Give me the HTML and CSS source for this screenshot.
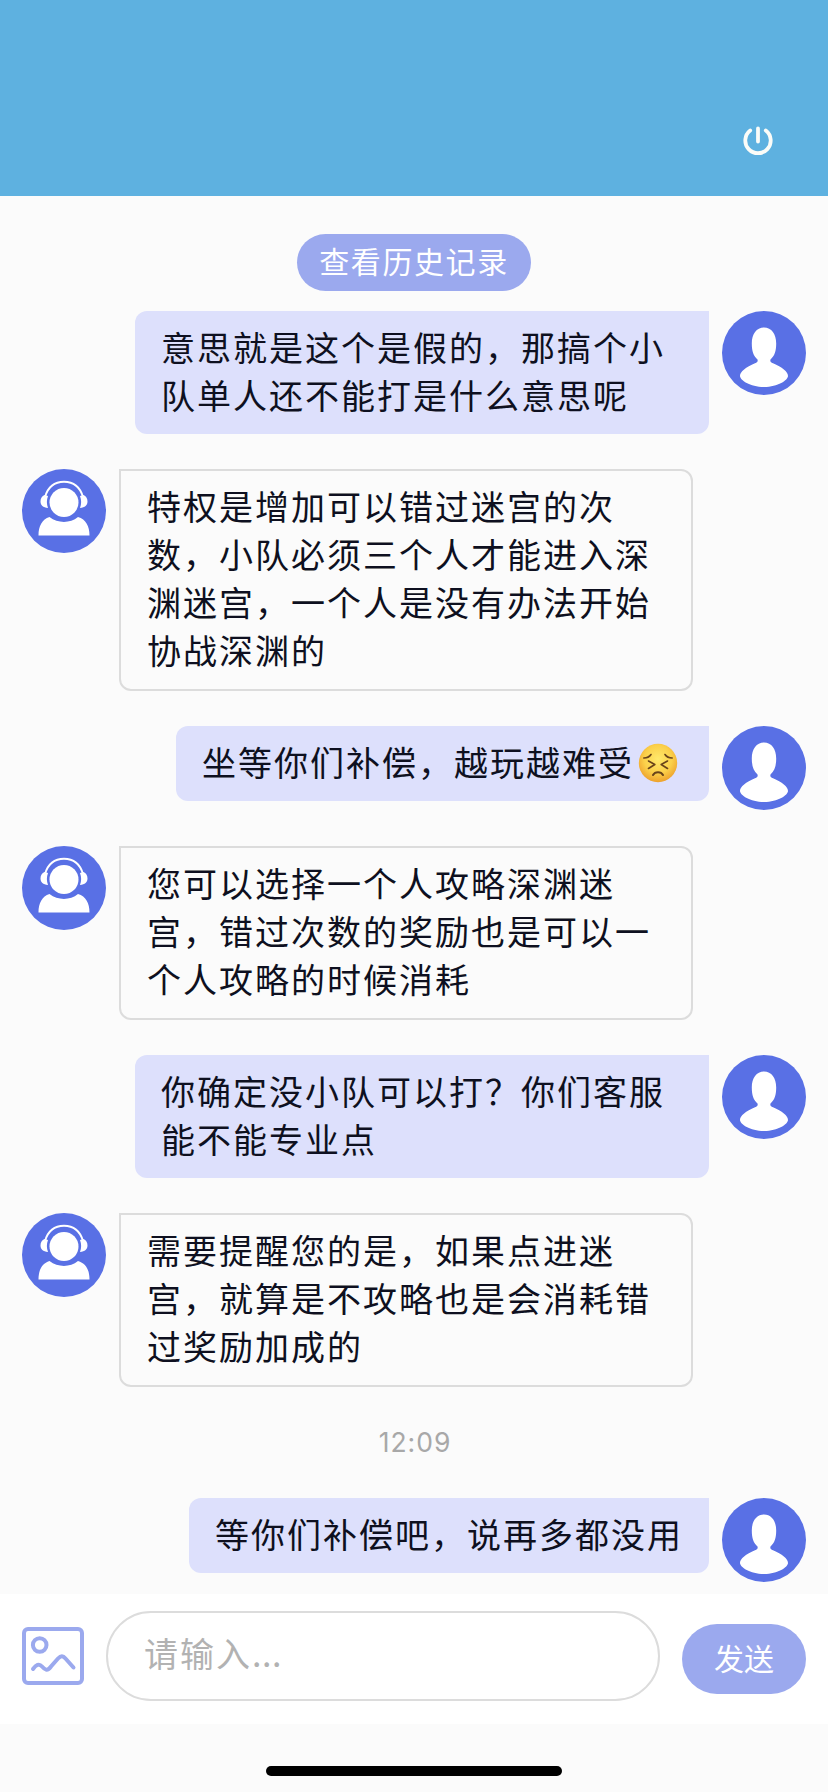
FILE: index.html
```html
<!DOCTYPE html>
<html lang="zh-CN">
<head>
<meta charset="utf-8">
<title>在线客服</title>
<link rel="stylesheet" href="styles.css">
</head>
<body>
<svg class="defs" width="0" height="0" aria-hidden="true">
  <symbol id="user" viewBox="0 0 84 84">
    <circle cx="42" cy="42" r="42" fill="#5970e5"/>
    <path d="M42 16.500C34.500 16.500 29.800 23 29.800 32.500C29.800 40 31.500 45 35.500 48.500C36 50.500 35.500 51 33 52.200C24 56 18 60.500 18 65C18 69 28 76 42 76S66 69 66 65C66 60.500 60 56 51 52.200C48.500 51 48 50.500 48.500 48.500C52.500 45 54.200 40 54.200 32.500C54.200 23 49.500 16.500 42 16.500Z" fill="#fff"/>
  </symbol>
  <symbol id="agent" viewBox="0 0 84 84">
    <circle cx="42" cy="42" r="42" fill="#5970e5"/>
    <path d="M23 28C26 18 33 12.800 42 12.800S58 18 61 28" fill="none" stroke="#fff" stroke-width="1.900"/>
    <path d="M22.500 26L26 27C24.500 31 24.500 35 26 39C21 38.500 18.500 36 18.500 32.500C18.500 29.500 20 27 22.500 26ZM61.500 26L58 27C59.500 31 59.500 35 58 39C63 38.500 65.500 36 65.500 32.500C65.500 29.500 64 27 61.500 26Z" fill="#fff"/>
    <circle cx="42" cy="33.500" r="14.500" fill="#fff"/>
    <path d="M16.500 66.500C16.500 57 20 50.500 27.500 48C36 54.500 48 54.500 56 48C64 50.500 67.500 57 67.500 66.500Z" fill="#fff"/>
  </symbol>
</svg>
<div class="screen">
  <header class="header">
    <svg class="power" viewBox="0 0 30 30"><path d="M7.200 4.500A12.700 12.700 0 1 0 22.800 4.500M15 2.500V15.500" fill="none" stroke="#fbfcf8" stroke-width="3.800" stroke-linecap="round"/></svg>
  </header>
  <main class="chat">
    <button class="history">查看历史记录</button>
    <div class="row mine"><p class="bubble">意思就是这个是假的，那搞个小队单人还不能打是什么意思呢</p><svg class="avatar"><use href="#user"/></svg></div>
    <div class="row"><svg class="avatar"><use href="#agent"/></svg><p class="bubble">特权是增加可以错过迷宫的次数，小队必须三个人才能进入深渊迷宫，一个人是没有办法开始协战深渊的</p></div>
    <div class="row mine"><p class="bubble">坐等你们补偿，越玩越难受<svg class="emoji" viewBox="0 0 40 40">
      <defs><radialGradient id="face" cx=".5" cy=".4" r=".6"><stop offset="0" stop-color="#ffe96c"/><stop offset=".6" stop-color="#fbd04a"/><stop offset="1" stop-color="#eda12c"/></radialGradient></defs>
      <circle cx="20" cy="20" r="19.200" fill="url(#face)"/>
      <g fill="none" stroke="#69431a" stroke-width="1.600" stroke-linecap="round" stroke-linejoin="round"><path d="M5.800 15C8.500 15 11.500 13.800 13 11.500M34.200 15C31.500 15 28.500 13.800 27 11.500M10.500 18L16.800 21.500L10.500 25.500M29.500 18L23.200 21.500L29.500 25.500"/><path d="M15 32C17 28.200 23 28.200 25 32" stroke-width="2"/></g>
    </svg></p><svg class="avatar"><use href="#user"/></svg></div>
    <div class="row"><svg class="avatar"><use href="#agent"/></svg><p class="bubble">您可以选择一个人攻略深渊迷宫，错过次数的奖励也是可以一个人攻略的时候消耗</p></div>
    <div class="row mine"><p class="bubble">你确定没小队可以打？你们客服能不能专业点</p><svg class="avatar"><use href="#user"/></svg></div>
    <div class="row"><svg class="avatar"><use href="#agent"/></svg><p class="bubble">需要提醒您的是，如果点进迷宫，就算是不攻略也是会消耗错过奖励加成的</p></div>
    <time class="time">12:09</time>
    <div class="row mine"><p class="bubble">等你们补偿吧，说再多都没用</p><svg class="avatar"><use href="#user"/></svg></div>
  </main>
  <footer class="composer">
    <svg class="picture" viewBox="0 0 62 58" fill="none" stroke="#9ba9ee" stroke-width="4"><rect x="2" y="2" width="58" height="54" rx="4"/><circle cx="17.700" cy="18" r="6.800"/><path d="M11 42C14 38 17 36 20 39.500S25.500 44.500 29 39.500L36 31.500C39 28.300 41 28.500 43.500 31.500L51.500 40.500" stroke-linecap="round"/></svg>
    <div class="input">请输入<span class="dots">...</span></div>
    <button class="send">发送</button>
  </footer>
  <div class="bottom"><div class="home"></div></div>
</div>
</body>
</html>
```
FILE: styles.css
```css
* { box-sizing: border-box; }
body {
  margin: 0;
  background: #fbfbfb;
  font-family: "Noto Sans CJK SC", sans-serif;
  color: #0e1020;
}
button {
  border: 0;
  padding: 0;
  font-family: inherit;
  color: #fff;
  background: #9ba9ee;
}
.defs { position: absolute; }
.screen {
  width: 828px;
  height: 1792px;
  display: flex;
  flex-direction: column;
  overflow: hidden;
}
.header {
  height: 196px;
  flex: none;
  background: #5eb1e0;
  display: flex;
  justify-content: flex-end;
  padding: 126px 55px 0 0;
}
.power { width: 30px; height: 30px; }
.chat {
  height: 1398px;
  flex: none;
  display: flex;
  flex-direction: column;
  padding: 38px 22px 0;
}
.history {
  align-self: center;
  flex: none;
  width: 234px;
  height: 57px;
  margin-bottom: 20px;
  padding-bottom: 6px;
  border-radius: 29px;
  font-size: 30px;
  letter-spacing: 1.6px;
}
.row {
  display: flex;
  flex: none;
  align-items: flex-start;
  gap: 13px;
  min-height: 85px;
  margin-bottom: 35px;
}
.mine { justify-content: flex-end; }
.avatar { width: 84px; height: 84px; flex: none; }
.bubble {
  margin: 0;
  max-width: 574px;
  padding: 11px 26px 15px;
  border: 2px solid #dcdcdc;
  border-radius: 0 12px 12px 12px;
  font-size: 34px;
  line-height: 48px;
  letter-spacing: 2px;
}
.mine .bubble {
  padding: 11.5px 26px 15.5px;
  border: 0;
  border-radius: 12px 0 12px 12px;
  background: #dde0fc;
}
.emoji {
  width: 40px;
  height: 40px;
  margin: 0 5px 0 4px;
  vertical-align: -7px;
}
.time {
  flex: none;
  margin: 2px 0 38px;
  padding-left: 2px;
  text-align: center;
  font: 26.5px/36px Inter, sans-serif;
  letter-spacing: 1px;
  color: #a8a8a8;
}
.composer {
  height: 130px;
  flex: none;
  display: flex;
  background: #fff;
  padding: 17px 22px 0;
}
.picture { width: 62px; height: 58px; margin-top: 16px; }
.input {
  width: 554px;
  height: 90px;
  margin: 0 22px;
  padding-left: 36px;
  border: 2px solid #dcdcdc;
  border-radius: 45px;
  font-size: 34px;
  line-height: 80px;
  letter-spacing: 2px;
  color: #b2b2b2;
}
.dots { letter-spacing: .5px; }
.send {
  width: 124px;
  height: 70px;
  margin-top: 13px;
  padding-bottom: 5px;
  border-radius: 35px;
  font-size: 30px;
}
.bottom {
  flex: 1;
  display: flex;
  justify-content: center;
  padding-top: 42px;
}
.home { width: 296px; height: 10px; border-radius: 5px; background: #000; }
```
